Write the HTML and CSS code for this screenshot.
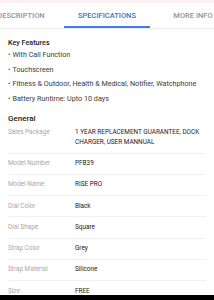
FILE: index.html
```html
<!DOCTYPE html>
<html>
<head>
<meta charset="utf-8">
<link rel="stylesheet" href="styles.css">
</head>
<body>
<div class="page">
  <div class="topline"></div>
  <nav class="tabs">
    <div class="tab">DESCRIPTION</div>
    <div class="tab active">SPECIFICATIONS</div>
    <div class="tab">MORE INFO</div>
  </nav>
  <section class="features">
    <h3 class="heading">Key Features</h3>
    <ul class="bullets">
      <li>With Call Function</li>
      <li>Touchscreen</li>
      <li>Fitness &amp; Outdoor, Health &amp; Medical, Notifier, Watchphone</li>
      <li>Battery Runtime: Upto 10 days</li>
    </ul>
  </section>
  <section class="general">
    <h3 class="heading gen">General</h3>
    <div class="row"><div class="label">Sales Package</div><div class="value">1 YEAR REPLACEMENT GUARANTEE, DOCK CHARGER, USER MANNUAL</div></div>
    <div class="row"><div class="label">Model Number</div><div class="value">PFB39</div></div>
    <div class="row"><div class="label">Model Name</div><div class="value">RISE PRO</div></div>
    <div class="row"><div class="label">Dial Color</div><div class="value">Black</div></div>
    <div class="row"><div class="label">Dial Shape</div><div class="value">Square</div></div>
    <div class="row"><div class="label">Strap Color</div><div class="value">Grey</div></div>
    <div class="row"><div class="label">Strap Material</div><div class="value">Silicone</div></div>
    <div class="row last"><div class="label">Size</div><div class="value">FREE</div></div>
  </section>
  <div class="navbar"></div>
</div>
</body>
</html>
```
FILE: styles.css
```css
html, body {
  margin: 0;
  padding: 0;
  background: #fff;
}
body {
  font-family: Roboto, "Noto Sans", sans-serif;
  color: #212121;
  width: 214px;
  height: 300px;
  overflow: hidden;
}
.page {
  height: 300px;
  display: flex;
  flex-direction: column;
  position: relative;
  overflow: hidden;
}
.topline {
  height: 3px;
  background: #fbf1f3;
  flex-shrink: 0;
}
.tabs {
  display: flex;
  margin-left: -22px;
  height: 25px;
  border-bottom: 1px solid #ececec;
  flex-shrink: 0;
}
.tab {
  width: 86px;
  flex-shrink: 0;
  text-align: center;
  font-size: 7.5px;
  font-weight: 500;
  color: #8b95a8;
  line-height: 26px;
  box-sizing: border-box;
  border-bottom: 2px solid transparent;
  height: 25px;
  white-space: nowrap;
}
.tab.active {
  color: #3f6fc4;
  border-bottom-color: #3f7fe0;
}
.features {
  padding: 9px 8px 0 8px;
  flex-shrink: 0;
}
.heading {
  margin: 0;
  font-size: 7.2px;
  font-weight: 500;
  color: #212121;
  line-height: 10px;
}
.bullets {
  list-style: none;
  margin: 0;
  padding: 0;
}
.bullets li {
  font-size: 7.2px;
  color: #3a3a3a;
  line-height: 14.7px;
  white-space: nowrap;
}
.bullets li::before {
  content: "\2022";
  margin-right: 2px;
  color: #555;
}
.general {
  padding: 7px 8px 0 8px;
  flex-shrink: 0;
}
.heading.gen {
  font-size: 8px;
  line-height: 9px;
}
.row {
  display: flex;
  padding: 5.4px 0;
  border-bottom: 1px solid #f0f0f0;
  font-size: 6.4px;
  line-height: 9.5px;
}
.row.last {
  border-bottom: none;
}
.label {
  width: 67px;
  flex-shrink: 0;
  color: #a8a8a8;
}
.value {
  flex: 1;
  color: #212121;
  padding-right: 6px;
}
.navbar {
  position: absolute;
  left: 0;
  right: 0;
  bottom: 0;
  height: 5px;
  background: #000;
}
```
